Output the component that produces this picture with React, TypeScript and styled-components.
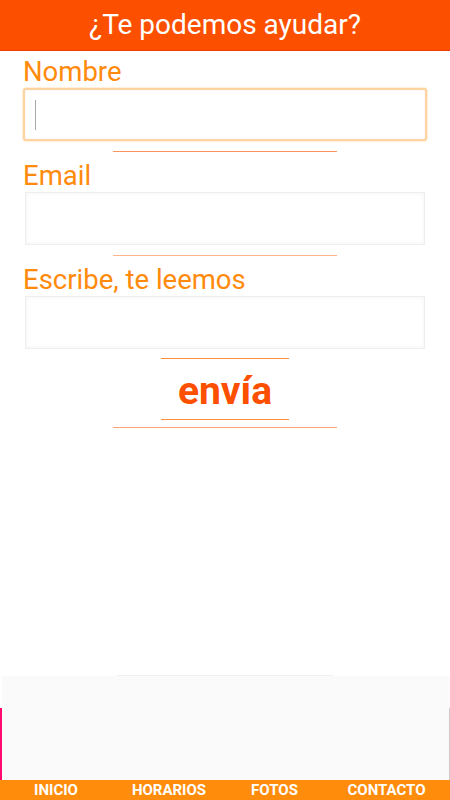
import React from 'react'
import styled, { createGlobalStyle } from 'styled-components'

const GlobalStyle = createGlobalStyle`
  html, body {
    margin: 0;
    padding: 0;
    background: #fff;
  }
  * {
    box-sizing: border-box;
  }
`

const navItems = [
  { label: 'INICIO', width: 112 },
  { label: 'HORARIOS', width: 114 },
  { label: 'FOTOS', width: 97 },
  { label: 'CONTACTO', width: 127 },
]

const App: React.FC = () => {
  return (
    <Page>
      <GlobalStyle />
      <Header>¿Te podemos ayudar?</Header>
      <Form>
        <Label>Nombre</Label>
        <Field $focused>
          <Caret />
        </Field>
        <Rule $width={224} $color="#f8935e" />
        <Label>Email</Label>
        <Field />
        <Rule $width={224} $color="#ffb28c" />
        <Label>Escribe, te leemos</Label>
        <Field />
        <SendBlock>
          <Rule $width={128} $color="#ff8d3c" $top={9} $bottom={0} />
          <SendButton>envía</SendButton>
          <Rule $width={128} $color="#ff8d3c" $top={0} $bottom={0} />
        </SendBlock>
        <Rule $width={224} $color="#ffa374" $top={7} />
      </Form>
      <Banner>
        <BannerBody />
      </Banner>
      <Nav style={{ gridTemplateColumns: navItems.map(i => `${i.width}px`).join(' ') }}>
        {navItems.map(item => (
          <NavItem key={item.label}>{item.label}</NavItem>
        ))}
      </Nav>
    </Page>
  )
}

const Page = styled.div`
  width: 450px;
  height: 800px;
  display: flex;
  flex-direction: column;
  font-family: Roboto, 'Liberation Sans', sans-serif;
  overflow: hidden;
`

const Header = styled.div`
  height: 51px;
  flex-shrink: 0;
  background: #fc5000;
  border-bottom: 1px solid #f23c00;
  color: #fff;
  font-size: 28px;
  line-height: 50px;
  text-align: center;
`

const Form = styled.div`
  flex: 1;
  display: flex;
  flex-direction: column;
  padding: 4px 23px 0;
`

const Label = styled.div`
  color: #ff8a0c;
  font-size: 27.5px;
  line-height: 33px;
  height: 33px;
  white-space: nowrap;
`

const Field = styled.div<{ $focused?: boolean }>`
  height: 53px;
  margin: 0 ${p => (p.$focused ? '0' : '2px')};
  border-radius: ${p => (p.$focused ? '3px' : '0')};
  border: ${p => (p.$focused ? '2px solid #ffd3a0' : '1px solid #eeeeee')};
  background: #fff;
  box-shadow: ${p =>
    p.$focused ? '0 0 2px #ffc88a, inset 0 0 3px #f2f2f2' : 'inset 0 0 4px #f3f3f3'};
  display: flex;
  align-items: center;
  padding-left: 10px;
`

const Caret = styled.div`
  width: 1px;
  height: 30px;
  background: #a8a8a8;
`

const Rule = styled.div<{ $width: number; $color: string; $top?: number; $bottom?: number }>`
  align-self: center;
  width: ${p => p.$width}px;
  height: 1px;
  background: ${p => p.$color};
  margin-top: ${p => p.$top ?? 10}px;
  margin-bottom: ${p => p.$bottom ?? 7}px;
`

const SendBlock = styled.div`
  display: flex;
  flex-direction: column;
  align-items: center;
`

const SendButton = styled.div`
  color: #fc5000;
  font-size: 39px;
  font-weight: 700;
  height: 60px;
  line-height: 64px;
`

const Banner = styled.div`
  height: 104px;
  flex-shrink: 0;
  padding-left: 2px;
  background: linear-gradient(#fff 0 32px, #ff0a6e 32px);
  position: relative;
  &::before {
    content: '';
    position: absolute;
    top: -1px;
    left: 117px;
    width: 216px;
    height: 1px;
    background: #f0f0f0;
  }
`

const BannerBody = styled.div`
  height: 100%;
  background: #fafafa;
  border-right: 1px solid #d9d6d6;
  border-image: linear-gradient(transparent 32px, #cfcaca 32px) 1;
`

const Nav = styled.div`
  height: 20px;
  flex-shrink: 0;
  background: #ff8c0a;
  display: grid;
`

const NavItem = styled.div`
  color: #fff;
  font-size: 15px;
  font-weight: 700;
  line-height: 21px;
  text-align: center;
`

export default App
